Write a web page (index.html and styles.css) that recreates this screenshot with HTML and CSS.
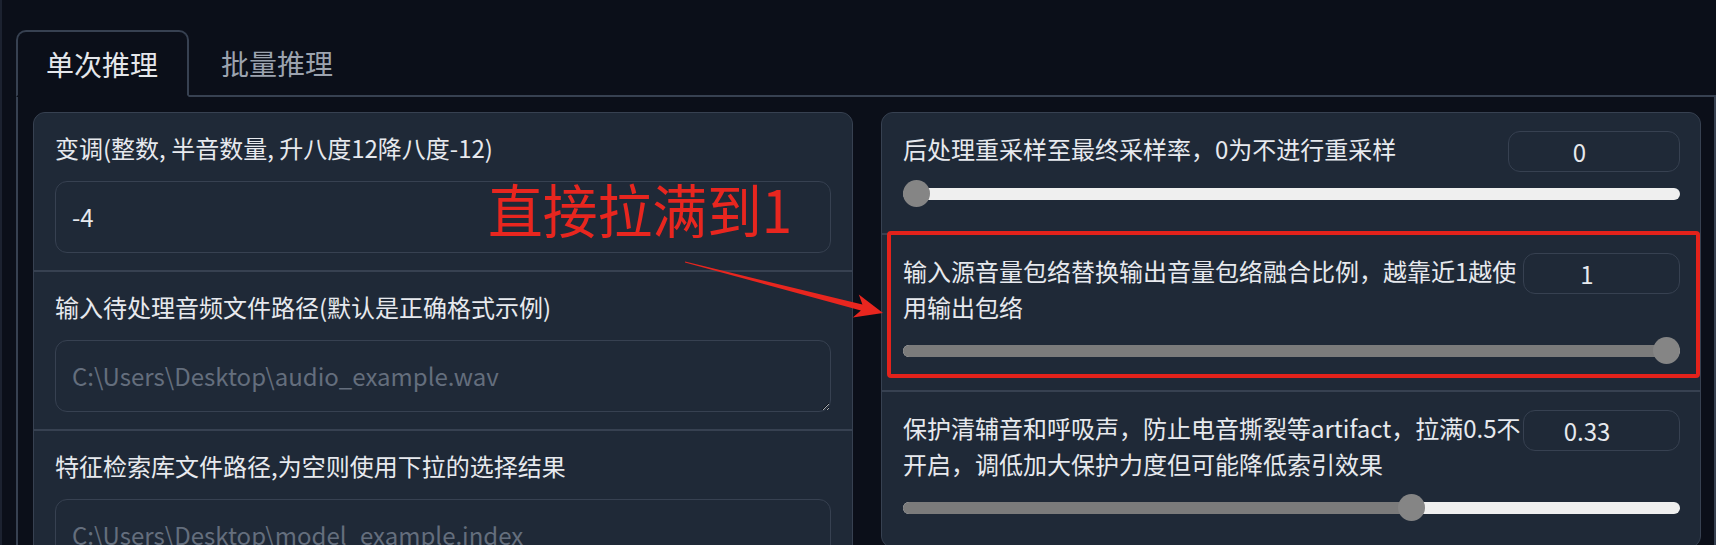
FILE: index.html
```html
<!DOCTYPE html>
<html lang="zh-CN">
<head>
<meta charset="utf-8">
<title>推理</title>
<link rel="stylesheet" href="styles.css">
</head>
<body>
<div class="app">
  <div class="tabs">
    <div class="tab-nav">
      <button class="tab tab-active">单次推理</button>
      <button class="tab">批量推理</button>
      <div class="tab-fill"></div>
    </div>
    <div class="tab-panel">
      <div class="cols">
        <div class="card">
          <div class="block">
            <label class="lbl">变调(整数, 半音数量, 升八度12降八度-12)</label>
            <textarea class="field" rows="1">-4</textarea>
          </div>
          <div class="block">
            <label class="lbl">输入待处理音频文件路径(默认是正确格式示例)</label>
            <textarea class="field resizable" rows="1" placeholder="C:\Users\Desktop\audio_example.wav"></textarea>
          </div>
          <div class="block">
            <label class="lbl">特征检索库文件路径,为空则使用下拉的选择结果</label>
            <textarea class="field" rows="1" placeholder="C:\Users\Desktop\model_example.index"></textarea>
          </div>
        </div>
        <div class="card">
          <div class="block sblock">
            <div class="head">
              <span class="lbl">后处理重采样至最终采样率，0为不进行重采样</span>
              <input class="num num-wide" type="number" value="0">
            </div>
            <div class="range" style="--v:0"><div class="fill"></div><div class="thumb"></div></div>
          </div>
          <div class="block sblock">
            <div class="head">
              <span class="lbl">输入源音量包络替换输出音量包络融合比例，越靠近1越使用输出包络</span>
              <input class="num" type="number" value="1">
            </div>
            <div class="range" style="--v:1"><div class="fill"></div><div class="thumb"></div></div>
            <div class="mark"></div>
          </div>
          <div class="block sblock">
            <div class="head">
              <span class="lbl">保护清辅音和呼吸声，防止电音撕裂等artifact，拉满0.5不开启，调低加大保护力度但可能降低索引效果</span>
              <input class="num" type="number" value="0.33">
            </div>
            <div class="range" style="--v:0.66"><div class="fill"></div><div class="thumb"></div></div>
          </div>
        </div>
      </div>
    </div>
  </div>
  <div class="note">直接拉满到1</div>
  <svg class="arrow" viewBox="0 0 210 70" width="210" height="70">
    <polygon points="3,6.4 180.4,49.6 176.8,39.4 201,58 170.8,62.6 178.9,55.4 3,7.6" fill="#e8261f"/>
  </svg>
</div>
</body>
</html>
```
FILE: styles.css
```css
html, body {
  margin: 0;
  padding: 0;
}
body {
  background: #0b0f19;
  font-family: "Noto Sans CJK SC", "Noto Sans", sans-serif;
  color: #e5e7eb;
  height: 545px;
  overflow: hidden;
}
.app {
  position: relative;
  height: 545px;
  box-sizing: border-box;
  border-left: 2px solid #1c2230;
  padding-top: 30px;
}
.tabs {
  margin-left: 14px;
}
.tab-nav {
  display: flex;
  height: 67px;
}
.tab {
  font-family: inherit;
  font-size: 28px;
  line-height: 36px;
  height: 67px;
  box-sizing: border-box;
  background: transparent;
  border: 0;
  border-bottom: 2px solid #374151;
  padding: 0 32px;
  color: #9ca3af;
  cursor: pointer;
}
.tab-active {
  border: 2px solid #374151;
  border-bottom: 2px solid transparent;
  border-radius: 10px 10px 0 0;
  padding: 0 29px 0 28px;
  color: #e5e7eb;
}
.tab-fill {
  flex: 1;
  border-bottom: 2px solid #374151;
}
.tab-panel {
  border: 2px solid #374151;
  border-top: 0;
  padding: 15px 13px 0 15px;
}
.cols {
  display: grid;
  grid-template-columns: 1fr 1fr;
  gap: 28px;
  align-items: start;
}
.card {
  background: #374151;
  border: 1px solid #374151;
  border-radius: 12px;
  overflow: hidden;
  display: flex;
  flex-direction: column;
  gap: 2px;
}
.block {
  background: #1f2937;
  padding: 17px 21px 17px;
}
.lbl {
  display: block;
  font-size: 24px;
  line-height: 36px;
  color: #e7e9ee;
  margin-bottom: 15px;
}
.field {
  display: block;
  width: 100%;
  box-sizing: border-box;
  height: 72px;
  padding: 17px 16px;
  border: 1px solid #374151;
  border-radius: 12px;
  background: #1f2937;
  color: #e7e9ee;
  font-family: inherit;
  font-size: 24px;
  line-height: 36px;
  resize: none;
  outline: none;
  overflow: hidden;
  color-scheme: dark;
}
.field::placeholder {
  color: #646e7d;
}
.resizable {
  resize: vertical;
}
.sblock {
  position: relative;
  padding: 18px 20px 26px 21px;
}
.head {
  display: flex;
  align-items: flex-start;
}
.head .lbl {
  flex: 1;
  margin: 0 0 4px;
}
.num {
  width: 157px;
  height: 41px;
  box-sizing: border-box;
  border: 1px solid #374151;
  border-radius: 12px;
  background: #1f2937;
  color: #e7e9ee;
  font-family: inherit;
  font-size: 24px;
  text-align: center;
  padding: 0 29px 0 0;
  outline: none;
  -moz-appearance: textfield;
}
.num::-webkit-inner-spin-button,
.num::-webkit-outer-spin-button {
  -webkit-appearance: none;
  margin: 0;
}
.num-wide {
  width: 172px;
}
.range {
  position: relative;
  height: 27px;
  margin-top: 8px;
}
.range::before {
  content: "";
  position: absolute;
  left: 0;
  right: 0;
  top: 8px;
  height: 12px;
  border-radius: 6px;
  background: #efefef;
}
.fill {
  position: absolute;
  left: 0;
  top: 8px;
  height: 12px;
  width: calc(var(--v) * (100% - 27px) + 13.5px);
  border-radius: 6px;
  background: #7b7b7b;
}
.thumb {
  position: absolute;
  top: 0;
  left: calc(var(--v) * (100% - 27px));
  width: 27px;
  height: 27px;
  border-radius: 50%;
  background: #858585;
}
.mark {
  position: absolute;
  top: -4px;
  left: 5px;
  right: 0;
  bottom: 12px;
  border: 4px solid #e3221b;
  border-radius: 4px;
  pointer-events: none;
}
.note {
  position: absolute;
  left: 486px;
  top: 179px;
  font-size: 58px;
  line-height: 1;
  color: #e8261f;
  white-space: nowrap;
  transform: scaleX(0.944);
  transform-origin: left top;
}
.arrow {
  position: absolute;
  left: 680px;
  top: 255px;
}
```
